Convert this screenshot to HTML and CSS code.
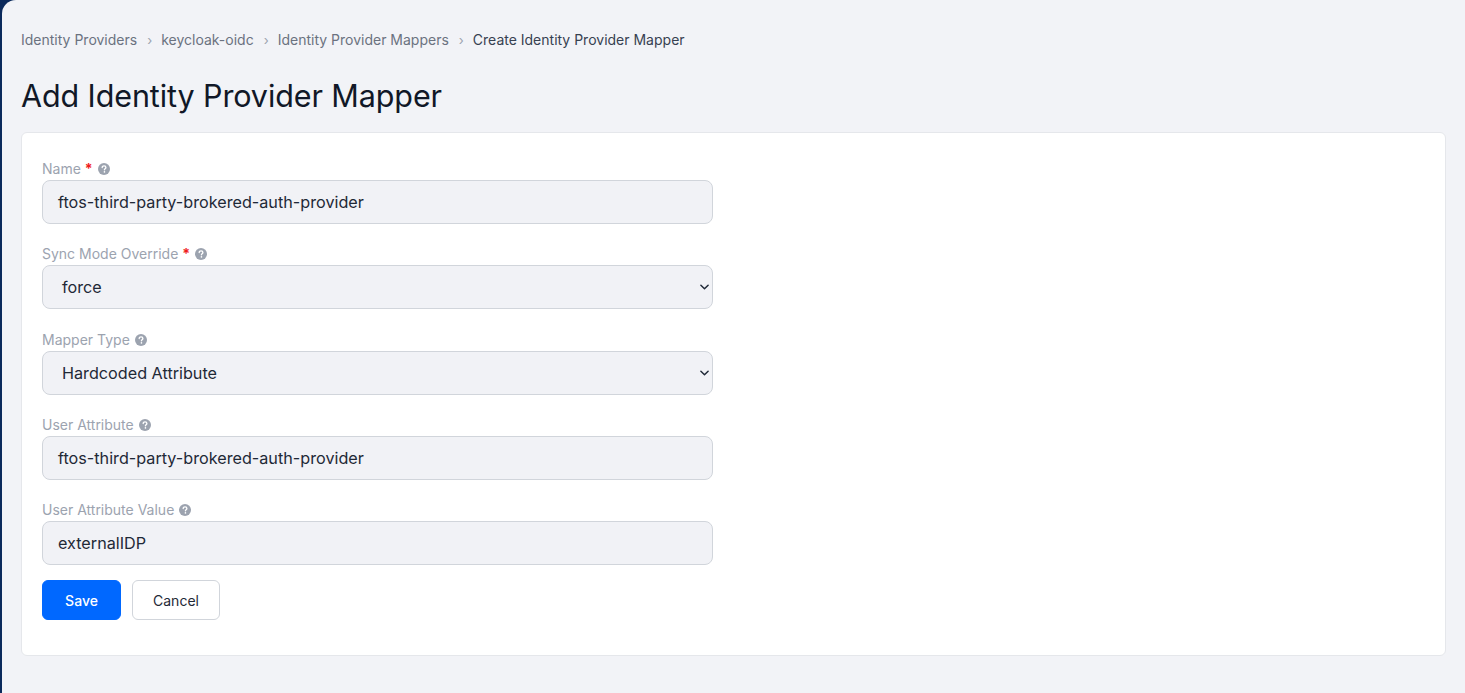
FILE: index.html
```html
<!DOCTYPE html>
<html>
<head>
<meta charset="utf-8">
<link rel="stylesheet" href="styles.css">
</head>
<body>
<div class="shell">
  <div class="rail"></div>
  <main class="main">
    <nav class="crumbs">
      <span class="crumb">Identity Providers</span>
      <span class="sep">›</span>
      <span class="crumb">keycloak-oidc</span>
      <span class="sep">›</span>
      <span class="crumb">Identity Provider Mappers</span>
      <span class="sep">›</span>
      <span class="crumb current">Create Identity Provider Mapper</span>
    </nav>
    <h1 class="title">Add Identity Provider Mapper</h1>
    <section class="card">
      <div class="field">
        <label class="label">Name <span class="req">*</span> <svg class="help" viewBox="0 0 16 16"><circle cx="8" cy="8" r="8" fill="#9ca3af"/><path d="M5.6 6.1c0-1.4 1.1-2.3 2.5-2.3s2.4.9 2.4 2.1c0 1.6-1.9 1.7-1.9 3.1" fill="none" stroke="#fff" stroke-width="1.8" stroke-linecap="round"/><circle cx="8.6" cy="11.9" r="1.1" fill="#fff"/></svg></label>
        <div class="input">ftos-third-party-brokered-auth-provider</div>
      </div>
      <div class="field">
        <label class="label">Sync Mode Override <span class="req">*</span> <svg class="help" viewBox="0 0 16 16"><circle cx="8" cy="8" r="8" fill="#9ca3af"/><path d="M5.6 6.1c0-1.4 1.1-2.3 2.5-2.3s2.4.9 2.4 2.1c0 1.6-1.9 1.7-1.9 3.1" fill="none" stroke="#fff" stroke-width="1.8" stroke-linecap="round"/><circle cx="8.6" cy="11.9" r="1.1" fill="#fff"/></svg></label>
        <div class="input select"><span class="sel-text">force</span><svg class="chev" viewBox="0 0 10 6"><path d="M1 1l4 4 4-4" fill="none" stroke="#1f2937" stroke-width="1.6" stroke-linecap="round" stroke-linejoin="round"/></svg></div>
      </div>
      <div class="field">
        <label class="label">Mapper Type <svg class="help" viewBox="0 0 16 16"><circle cx="8" cy="8" r="8" fill="#9ca3af"/><path d="M5.6 6.1c0-1.4 1.1-2.3 2.5-2.3s2.4.9 2.4 2.1c0 1.6-1.9 1.7-1.9 3.1" fill="none" stroke="#fff" stroke-width="1.8" stroke-linecap="round"/><circle cx="8.6" cy="11.9" r="1.1" fill="#fff"/></svg></label>
        <div class="input select"><span class="sel-text">Hardcoded Attribute</span><svg class="chev" viewBox="0 0 10 6"><path d="M1 1l4 4 4-4" fill="none" stroke="#1f2937" stroke-width="1.6" stroke-linecap="round" stroke-linejoin="round"/></svg></div>
      </div>
      <div class="field">
        <label class="label">User Attribute <svg class="help" viewBox="0 0 16 16"><circle cx="8" cy="8" r="8" fill="#9ca3af"/><path d="M5.6 6.1c0-1.4 1.1-2.3 2.5-2.3s2.4.9 2.4 2.1c0 1.6-1.9 1.7-1.9 3.1" fill="none" stroke="#fff" stroke-width="1.8" stroke-linecap="round"/><circle cx="8.6" cy="11.9" r="1.1" fill="#fff"/></svg></label>
        <div class="input">ftos-third-party-brokered-auth-provider</div>
      </div>
      <div class="field last">
        <label class="label">User Attribute Value <svg class="help" viewBox="0 0 16 16"><circle cx="8" cy="8" r="8" fill="#9ca3af"/><path d="M5.6 6.1c0-1.4 1.1-2.3 2.5-2.3s2.4.9 2.4 2.1c0 1.6-1.9 1.7-1.9 3.1" fill="none" stroke="#fff" stroke-width="1.8" stroke-linecap="round"/><circle cx="8.6" cy="11.9" r="1.1" fill="#fff"/></svg></label>
        <div class="input">externalIDP</div>
      </div>
      <div class="actions">
        <button class="btn primary">Save</button>
        <button class="btn secondary">Cancel</button>
      </div>
    </section>
  </main>
</div>
</body>
</html>
```

FILE: styles.css
```css
* { box-sizing: border-box; }
html, body { margin: 0; padding: 0; }
body {
  background: #0b2a5c;
  font-family: Inter, "Noto Sans", "Liberation Sans", sans-serif;
  width: 1465px;
  height: 693px;
  overflow: hidden;
}
.shell {
  display: flex;
  height: 693px;
}
.rail {
  width: 2px;
  flex: none;
}
.main {
  flex: 1;
  background: #f2f3f7;
  border-top-left-radius: 14px;
  padding: 31px 19px 0 19px;
}
.crumbs {
  display: flex;
  align-items: center;
  font-size: 14px;
  line-height: 18px;
  color: #6b7280;
}
.crumb.current { color: #374151; }
.sep {
  margin: 0 9px 0 10px;
  color: #9ca3af;
  font-size: 13px;
}
.title {
  margin: 28px 0 0 0;
  font-size: 30.5px;
  line-height: 38px;
  font-weight: 400;
  color: #111827;
  letter-spacing: -0.1px;
}
.card {
  margin-top: 17px;
  background: #fff;
  border: 1px solid #e5e7eb;
  border-radius: 6px;
  padding: 27px 20px 35px 20px;
}
.field { margin-bottom: 21.25px; }
.field.last { margin-bottom: 15px; }
.label {
  display: flex;
  align-items: center;
  gap: 4px;
  font-size: 14px;
  line-height: 18px;
  color: #9ca3af;
  margin-bottom: 2px;
}
.req { color: #ef1c1c; font-weight: 700; }
.help { width: 12px; height: 12px; margin-left: 1px; }
.input {
  width: 671px;
  height: 44px;
  background: #f1f2f6;
  border: 1px solid #d1d5db;
  border-radius: 8px;
  padding: 0 15px;
  display: flex;
  align-items: center;
  font-size: 16.2px;
  color: #1f2937;
}
.select { padding-left: 19px; justify-content: space-between; padding-right: 3px; }
.chev { width: 9px; height: 6px; }
.actions {
  display: flex;
  gap: 11px;
}
.btn {
  height: 40px;
  border-radius: 6px;
  font-family: Inter, "Noto Sans", "Liberation Sans", sans-serif;
  font-size: 14px;
  cursor: pointer;
}
.btn.primary {
  width: 79px;
  background: #0068ff;
  border: 1px solid #0068ff;
  color: #fff;
  font-weight: 500;
}
.btn.secondary {
  width: 88px;
  background: #fff;
  border: 1px solid #d1d5db;
  color: #1f2937;
}
```
